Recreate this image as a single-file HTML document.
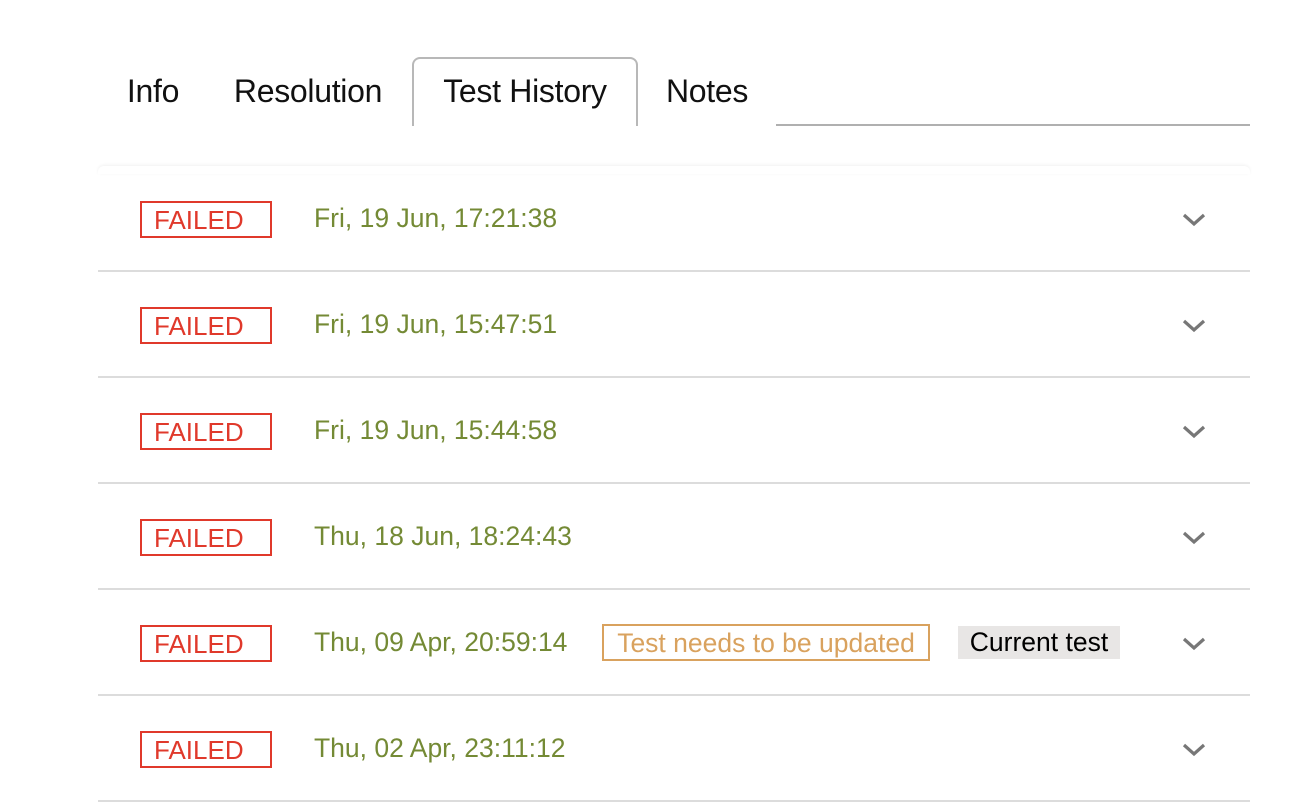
<!DOCTYPE html>
<html><head><style>
body{margin:0;width:1292px;height:812px;background:#fff;font-family:"Liberation Sans",Arial,sans-serif;position:relative;overflow:hidden}
.tab{position:absolute;top:57px;height:69px;line-height:69px;font-size:32px;color:#111;text-align:center;letter-spacing:-0.3px}
.act{border:2px solid #b8b8b8;border-bottom:none;border-radius:8px 8px 0 0;box-sizing:border-box;line-height:64px}
.line{position:absolute;left:776px;width:474px;top:124px;height:2px;background:#b0b0b0}
.card{position:absolute;left:98px;top:166px;width:1152px;height:8px;border-radius:6px 6px 0 0;box-shadow:0 -1px 3px rgba(0,0,0,0.06)}
.row{position:absolute;left:98px;width:1152px;height:104px;border-bottom:2px solid #dcdcdc}
.f{position:absolute;left:42px;top:35px;width:128px;height:33px;border:2px solid #e0392b;color:#e0392b;font-size:26px;line-height:34px;white-space:nowrap}
.f span{margin-left:12px}
.d{position:absolute;left:216px;top:35px;line-height:35px;font-size:26.5px;color:#748a35;white-space:nowrap}
.chev{position:absolute;left:1084px;top:46px}
.o{position:absolute;left:504px;top:34px;width:324px;height:33px;border:2px solid #d9a25e;color:#d9a25e;font-size:26.5px;line-height:35px;text-align:center;white-space:nowrap}
.g{position:absolute;left:860px;top:36px;width:162px;height:33px;background:#e8e6e5;color:#000;font-size:26.5px;line-height:33px;text-align:center;white-space:nowrap}
</style></head><body>
<div class="tab" style="left:108px;width:90px">Info</div>
<div class="tab" style="left:218px;width:180px">Resolution</div>
<div class="tab act" style="left:412px;width:226px">Test History</div>
<div class="tab" style="left:650px;width:114px">Notes</div>
<div class="line"></div>
<div class="card"></div>
<div class="row" style="top:166px"><div class="f"><span>FAILED</span></div><div class="d">Fri, 19 Jun, 17:21:38</div><svg class="chev" width="24" height="16"><path d="M2 3L12 12L22 3" fill="none" stroke="#777" stroke-width="3.2"/></svg></div>
<div class="row" style="top:272px"><div class="f"><span>FAILED</span></div><div class="d">Fri, 19 Jun, 15:47:51</div><svg class="chev" width="24" height="16"><path d="M2 3L12 12L22 3" fill="none" stroke="#777" stroke-width="3.2"/></svg></div>
<div class="row" style="top:378px"><div class="f"><span>FAILED</span></div><div class="d">Fri, 19 Jun, 15:44:58</div><svg class="chev" width="24" height="16"><path d="M2 3L12 12L22 3" fill="none" stroke="#777" stroke-width="3.2"/></svg></div>
<div class="row" style="top:484px"><div class="f"><span>FAILED</span></div><div class="d">Thu, 18 Jun, 18:24:43</div><svg class="chev" width="24" height="16"><path d="M2 3L12 12L22 3" fill="none" stroke="#777" stroke-width="3.2"/></svg></div>
<div class="row" style="top:590px"><div class="f"><span>FAILED</span></div><div class="d">Thu, 09 Apr, 20:59:14</div><div class="o">Test needs to be updated</div><div class="g">Current test</div><svg class="chev" width="24" height="16"><path d="M2 3L12 12L22 3" fill="none" stroke="#777" stroke-width="3.2"/></svg></div>
<div class="row" style="top:696px"><div class="f"><span>FAILED</span></div><div class="d">Thu, 02 Apr, 23:11:12</div><svg class="chev" width="24" height="16"><path d="M2 3L12 12L22 3" fill="none" stroke="#777" stroke-width="3.2"/></svg></div>
</body></html>
